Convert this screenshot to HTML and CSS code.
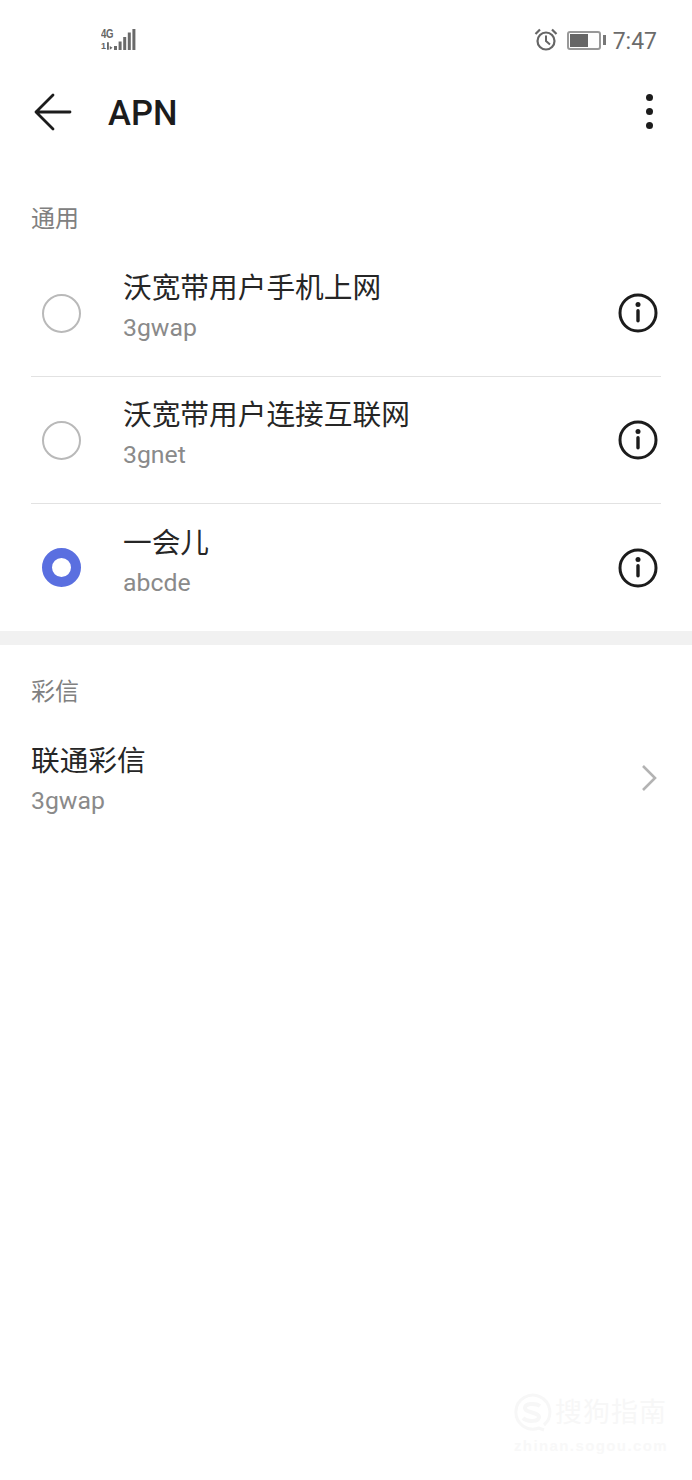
FILE: index.html
```html
<!DOCTYPE html>
<html lang="zh">
<head>
<meta charset="utf-8">
<title>APN</title>
<link rel="stylesheet" href="styles.css">
</head>
<body>
<div class="page">
  <div class="status">
    <div class="signal">
      <div class="net"><span class="net-g">4G</span><span class="net-h">1<svg class="arrows" width="7" height="8" viewBox="0 0 7 8"><path d="M0 0h2v8H0zM3 4l3 2-3 2z" fill="#666"/></svg></span></div>
      <svg class="bars" width="22" height="21" viewBox="0 0 22 21"><g fill="#6a6a6a"><rect x="0" y="17" width="3" height="4"/><rect x="4.600" y="12.500" width="3" height="8.500"/><rect x="9.200" y="8" width="3" height="13"/><rect x="13.800" y="3.500" width="3" height="17.500"/><rect x="18.400" y="0" width="3" height="21"/></g></svg>
    </div>
    <div class="status-right">
      <svg class="alarm" width="24" height="24" viewBox="0 0 24 24" fill="none" stroke="#666"><circle cx="12" cy="13" r="8.500" stroke-width="2.200"/><path d="M12 7.500V13l4 3.500" stroke-width="2"/><path d="M1.500 6L6 1.500M22.500 6L18 1.500" stroke-width="2.200"/></svg>
      <div class="battery"><div class="battery-body"><div class="battery-fill"></div></div><div class="battery-tip"></div></div>
      <span class="time">7:47</span>
    </div>
  </div>

  <header class="toolbar">
    <svg class="back" width="38" height="38" viewBox="0 0 38 38" fill="none" stroke="#1c1c1c" stroke-width="2.800" stroke-linecap="round" stroke-linejoin="round"><path d="M36 19H2M19 2L2 19l17 17"/></svg>
    <h1 class="title">APN</h1>
    <div class="more"><i></i><i></i><i></i></div>
  </header>

  <section class="group group-general">
    <h2 class="group-label">通用</h2>
    <div class="apn">
      <span class="radio"></span>
      <div class="apn-main">
        <div class="apn-text apn-text-raised"><div class="name">沃宽带用户手机上网</div><div class="sub">3gwap</div></div>
        <svg class="info" width="40" height="40" viewBox="0 0 40 40"><circle cx="20" cy="20" r="18" fill="none" stroke="#1c1c1c" stroke-width="3"/><circle cx="20" cy="11.500" r="2.500" fill="#1c1c1c"/><rect x="18.300" y="16" width="3.400" height="13.500" rx="1.700" fill="#1c1c1c"/></svg>
      </div>
    </div>
    <div class="apn">
      <span class="radio"></span>
      <div class="apn-main">
        <div class="apn-text apn-text-raised"><div class="name">沃宽带用户连接互联网</div><div class="sub">3gnet</div></div>
        <svg class="info" width="40" height="40" viewBox="0 0 40 40"><circle cx="20" cy="20" r="18" fill="none" stroke="#1c1c1c" stroke-width="3"/><circle cx="20" cy="11.500" r="2.500" fill="#1c1c1c"/><rect x="18.300" y="16" width="3.400" height="13.500" rx="1.700" fill="#1c1c1c"/></svg>
      </div>
    </div>
    <div class="apn">
      <span class="radio radio-on"></span>
      <div class="apn-main apn-last">
        <div class="apn-text apn-text-raised"><div class="name">一会儿</div><div class="sub">abcde</div></div>
        <svg class="info" width="40" height="40" viewBox="0 0 40 40"><circle cx="20" cy="20" r="18" fill="none" stroke="#1c1c1c" stroke-width="3"/><circle cx="20" cy="11.500" r="2.500" fill="#1c1c1c"/><rect x="18.300" y="16" width="3.400" height="13.500" rx="1.700" fill="#1c1c1c"/></svg>
      </div>
    </div>
  </section>

  <div class="band"></div>

  <section class="group">
    <h2 class="group-label group-label-mms">彩信</h2>
    <div class="mms">
      <div class="apn-text"><div class="name">联通彩信</div><div class="sub">3gwap</div></div>
      <svg class="chev" width="16" height="28" viewBox="0 0 16 28" fill="none" stroke="#b3b3b3" stroke-width="2.600"><path d="M2 2l12 12L2 26"/></svg>
    </div>
  </section>

  <div class="watermark">
    <svg width="42" height="42" viewBox="0 0 42 42" fill="none" stroke="#f7f7f7" stroke-width="3"><path d="M33 33A17 17 0 1 0 28 36l5 2"/><path d="M29 14c-4-3-15-3-15 2s14 4 14 9-12 5-16 1" stroke-width="4"/></svg>
    <div class="wm-text"><div class="wm-cn">搜狗指南</div><div class="wm-en">zhinan.sogou.com</div></div>
  </div>
</div>
</body>
</html>
```

FILE: styles.css
```css
* { box-sizing: border-box; }
html, body { margin: 0; padding: 0; background: #fff; }
body { font-family: Roboto, "Noto Sans CJK SC", sans-serif; color: #1c1c1c; }
.page { position: relative; width: 692px; height: 1480px; overflow: hidden; background: #fff; }

.status { height: 72px; display: flex; justify-content: space-between; align-items: flex-start; padding: 28px 35px 0 101px; }
.signal { display: flex; align-items: flex-start; gap: 0; height: 23px; padding-top: 1px; }
.net { width: 12.500px; height: 21px; display: flex; flex-direction: column; justify-content: space-between; font-family: "Liberation Sans", sans-serif; font-weight: 700; color: #666; }
.net-g { font-size: 12px; line-height: 10px; letter-spacing: -0.500px; transform: scaleX(.8); transform-origin: left center; }
.net-h { font-size: 9px; line-height: 8px; display: flex; align-items: center; gap: 1px; }
.arrows { display: block; }
.bars { display: block; }
.status-right { display: flex; align-items: center; height: 24px; }
.alarm { display: block; margin-right: 9px; }
.battery { display: flex; align-items: center; gap: 2px; margin-right: 7px; }
.battery-body { width: 34px; height: 19px; border: 2px solid #999; border-radius: 3px; padding: 1px; }
.battery-fill { width: 18px; height: 100%; background: #666; }
.battery-tip { width: 3px; height: 10px; background: #777; }
.time { font-size: 23px; line-height: 24px; color: #6b6b6b; position: relative; top: 2px; }

.toolbar { height: 79px; display: flex; align-items: center; padding: 0 39px 0 34px; }
.back { display: block; flex: none; }
.title { margin: 3px 0 0 36px; flex: 1; font-size: 34.500px; font-weight: 500; line-height: 40px; color: #1c1c1c; }
.more { display: flex; flex-direction: column; gap: 7px; }
.more i { display: block; width: 7px; height: 7px; border-radius: 50%; background: #1c1c1c; }

.group-general { padding-top: 50px; }
.group-label { margin: 0; padding-left: 31px; font-size: 24px; font-weight: 400; line-height: 36px; color: #808080; }
.group-general .group-label { margin-bottom: 13px; }
.group-label-mms { padding-top: 29px; }

.apn { display: flex; align-items: center; height: 127px; padding-left: 42px; }
.radio { flex: none; width: 39px; height: 39px; border-radius: 50%; border: 2px solid #b9b9b9; margin-right: 42px; }
.radio-on { border: 10px solid #5a6fe0; }
.apn-main { flex: 1; height: 127px; margin-right: 31px; display: flex; align-items: center; justify-content: space-between; border-bottom: 1px solid #e2e2e2; margin-left: -92px; padding-left: 92px; padding-right: 3px; }
.apn-last { border-bottom: 0; }
.apn-text { display: flex; flex-direction: column; }
.apn-text-raised { padding-bottom: 11px; }
.name { font-size: 28.700px; line-height: 38px; color: #262626; }
.sub { font-size: 24.800px; line-height: 36px; margin-top: 3px; color: #8a8a8a; }
.info { display: block; flex: none; }

.band { height: 14px; background: #f1f1f1; }

.mms { display: flex; align-items: center; justify-content: space-between; padding: 32px 35px 0 31px; }
.chev { display: block; margin-bottom: 6px; }

.watermark { position: absolute; right: 24px; top: 1392px; display: flex; gap: 2px; align-items: flex-start; }
.wm-text { display: flex; flex-direction: column; }
.wm-cn { font-size: 27px; line-height: 42px; letter-spacing: 1px; color: #f7f7f7; }
.wm-en { font-family: "Liberation Sans", sans-serif; font-weight: 700; margin: 2px 0 0 -41px; font-size: 15px; line-height: 20px; letter-spacing: 1.400px; color: #f8f8f8; white-space: nowrap; }
```
